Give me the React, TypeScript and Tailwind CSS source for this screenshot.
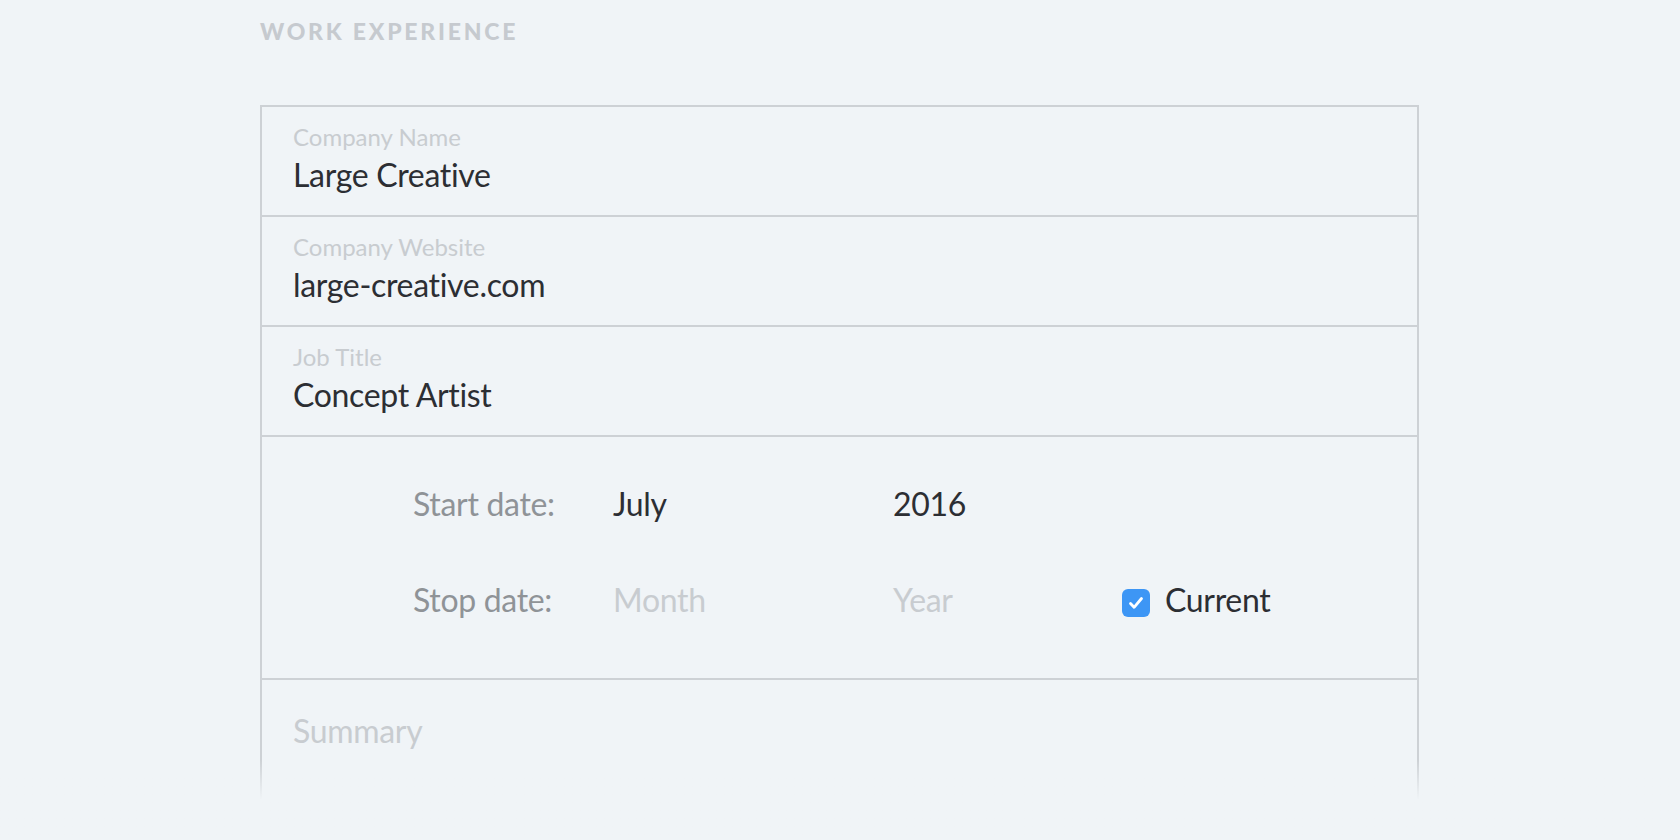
import React from 'react'

const fields = [
  { label: 'Company Name', value: 'Large Creative' },
  { label: 'Company Website', value: 'large-creative.com' },
  { label: 'Job Title', value: 'Concept Artist' },
]

function Field({ label, value }: { label: string; value: string }) {
  return (
    <div className="h-[110px] border-b-2 border-[#cdd1d5] pl-[31px] pt-[16px]">
      <div className="text-[24px] leading-[1.2] text-[#c8ccd0]">{label}</div>
      <div className="mt-[5px] text-[32px] leading-[1.2] tracking-[-0.01em] text-[#2c2e33]">{value}</div>
    </div>
  )
}

function DateRow({
  label,
  month,
  year,
  filled,
  current,
}: {
  label: string
  month: string
  year: string
  filled: boolean
  current?: boolean
}) {
  const valueColor = filled ? 'text-[#2c2e33]' : 'text-[#c8ccd0]'
  return (
    <div className="grid grid-cols-[200px_280px_229px_1fr] items-center text-[32px] leading-[1.2] tracking-[-0.01em]">
      <div className="text-[#8f9397]">{label}</div>
      <div className={valueColor}>{month}</div>
      <div className={valueColor}>{year}</div>
      {current ? (
        <div className="flex items-center gap-[15px]">
          <span className="mt-[6px] flex h-[28px] w-[28px] items-center justify-center rounded-[6px] bg-[#3d96f5]">
            <svg width="20" height="20" viewBox="0 0 20 20" fill="none">
              <path d="M4.5 10.5l3.6 3.8L15.5 5.5" stroke="white" strokeWidth="2.8" strokeLinecap="round" strokeLinejoin="round" />
            </svg>
          </span>
          <span className="text-[#2c2e33]">Current</span>
        </div>
      ) : (
        <div />
      )}
    </div>
  )
}

export default function App() {
  return (
    <div
      className="relative h-[840px] w-full overflow-hidden bg-[#f0f4f7] [font-variant-ligatures:none]"
      style={{ fontFamily: 'Lato, "Open Sans", sans-serif' }}
    >
      <div className="pl-[260px] pt-[18px]">
        <h2 className="text-[23px] font-black uppercase leading-[1.2] tracking-[0.12em] text-[#c6cacf]">
          Work Experience
        </h2>
      </div>

      <div className="ml-[260px] mt-[59px] w-[1159px] border-2 border-[#cdd1d5]">
        {fields.map((f) => (
          <Field key={f.label} label={f.label} value={f.value} />
        ))}

        <div className="flex h-[243px] flex-col gap-[58px] border-b-2 border-[#cdd1d5] pl-[151px] pt-[48px]">
          <DateRow label="Start date:" month="July" year="2016" filled />
          <DateRow label="Stop date:" month="Month" year="Year" filled={false} current />
        </div>

        <div className="h-[200px] pl-[31px] pt-[32px]">
          <div className="text-[32px] leading-[1.2] tracking-[-0.01em] text-[#c8ccd0]">Summary</div>
        </div>
      </div>

      {/* fade out at the bottom of the card */}
      <div className="absolute inset-x-0 bottom-0 h-[80px] bg-linear-to-b from-transparent from-0% to-[#f0f4f7] to-50%" />
    </div>
  )
}
